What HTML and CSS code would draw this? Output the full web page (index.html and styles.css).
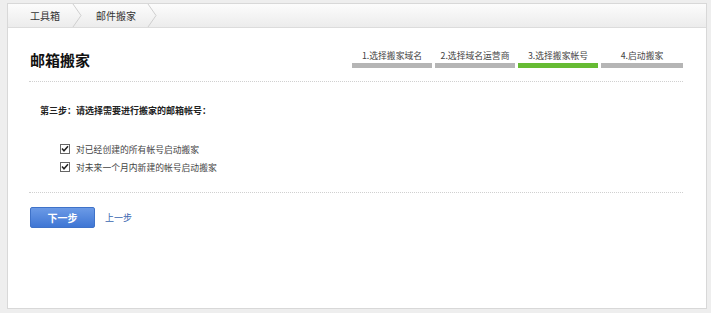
FILE: index.html
```html
<!DOCTYPE html>
<html lang="zh">
<head>
<meta charset="utf-8">
<title>邮箱搬家</title>
<link rel="stylesheet" href="styles.css">
</head>
<body>
<div class="frame">
  <div class="crumbs">
    <span class="crumb crumb-home">工具箱</span>
    <svg class="chev" width="10" height="23" viewBox="0 0 10 23"><polyline points="1,0 9,11.5 1,23" fill="none" stroke="#cfcfcf" stroke-width="1"/></svg>
    <span class="crumb crumb-cur">邮件搬家</span>
    <svg class="chev" width="10" height="23" viewBox="0 0 10 23"><polyline points="1,0 9,11.5 1,23" fill="none" stroke="#cfcfcf" stroke-width="1"/></svg>
  </div>
  <div class="content">
    <div class="head">
      <h1 class="title">邮箱搬家</h1>
      <div class="steps">
        <div class="step"><span class="step-label">1.选择搬家域名</span><span class="bar"></span></div>
        <div class="step"><span class="step-label">2.选择域名运营商</span><span class="bar"></span></div>
        <div class="step active"><span class="step-label">3.选择搬家帐号</span><span class="bar"></span></div>
        <div class="step"><span class="step-label">4.启动搬家</span><span class="bar"></span></div>
      </div>
    </div>
    <div class="section">
      <p class="lead">第三步：请选择需要进行搬家的邮箱帐号：</p>
      <ul class="options">
        <li><span class="box"><svg width="8" height="8" viewBox="0 0 8 8"><polyline points="1,3.5 3,5.8 7,1.2" fill="none" stroke="#222" stroke-width="1.5"/></svg></span>对已经创建的所有帐号启动搬家</li>
        <li><span class="box"><svg width="8" height="8" viewBox="0 0 8 8"><polyline points="1,3.5 3,5.8 7,1.2" fill="none" stroke="#222" stroke-width="1.5"/></svg></span>对未来一个月内新建的帐号启动搬家</li>
      </ul>
    </div>
    <div class="actions">
      <button class="btn">下一步</button>
      <a class="prev" href="#">上一步</a>
    </div>
  </div>
</div>
</body>
</html>
```
FILE: styles.css
```css
html, body {
  margin: 0;
  padding: 0;
}
body {
  background: #eeeeee;
  font-family: "Noto Sans CJK SC", "Liberation Sans", sans-serif;
  color: #333;
  font-size: 10px;
  width: 711px;
  height: 313px;
  overflow: hidden;
}
.frame {
  margin: 3px 4px 0 7px;
  height: 306px;
  border: 1px solid #d8d8d8;
  background: #fff;
  box-sizing: border-box;
  display: flex;
  flex-direction: column;
}
.crumbs {
  height: 23px;
  display: flex;
  align-items: center;
  padding-left: 22px;
  background: linear-gradient(#fcfcfc, #ececec);
  border-bottom: 1px solid #dcdcdc;
  flex: none;
}
.crumb {
  display: block;
  font-size: 10px;
  color: #333;
  line-height: 23px;
}
.crumb-home {
  margin-right: 12px;
}
.crumb-cur {
  margin: 0 11px 0 14px;
}
.chev {
  display: block;
  flex: none;
}
.content {
  padding: 0 23px 0 21px;
}
.head {
  display: flex;
  justify-content: space-between;
  align-items: flex-end;
  height: 40px;
  border-bottom: 1px dotted #d0d0d0;
  padding-bottom: 13px;
  box-sizing: content-box;
}
.title {
  margin: 0 0 -2px 1px;
  font-size: 15px;
  font-weight: bold;
  color: #111;
  line-height: 20px;
}
.steps {
  display: flex;
  gap: 3px;
  margin-bottom: 0;
}
.step {
  width: 80px;
  display: flex;
  flex-direction: column;
  align-items: center;
}
.step:last-child {
  width: 82px;
}
.step-label {
  font-size: 8.8px;
  color: #444;
  line-height: 12px;
  margin-bottom: 1px;
}
.bar {
  display: block;
  width: 100%;
  height: 5px;
  background: #b5b5b5;
}
.step.active .bar {
  background: #66bb33;
}
.section {
  border-bottom: 1px dotted #d0d0d0;
  padding: 22px 0 16px 0;
}
.lead {
  margin: 0 0 22px 11px;
  font-size: 9px;
  font-weight: bold;
  color: #222;
  line-height: 14px;
}
.options {
  list-style: none;
  margin: 0;
  padding: 0 0 0 31px;
}
.options li {
  display: flex;
  align-items: center;
  height: 18px;
  font-size: 8.8px;
  color: #444;
}
.box {
  width: 8px;
  height: 8px;
  border: 1px solid #666;
  background: #fff;
  display: inline-flex;
  align-items: center;
  justify-content: center;
  margin-right: 6px;
}
.box svg {
  display: block;
}
.actions {
  display: flex;
  align-items: center;
  padding-top: 14px;
}
.btn {
  width: 65px;
  height: 21px;
  border: 1px solid #3f72c8;
  border-radius: 2px;
  background: linear-gradient(#6b9ae6, #3f76d4);
  color: #fff;
  font-family: inherit;
  font-size: 10px;
  font-weight: bold;
  padding: 0;
  margin-left: 1px;
}
.prev {
  margin-left: 10px;
  color: #3a66b0;
  font-size: 9px;
  text-decoration: none;
}
```
